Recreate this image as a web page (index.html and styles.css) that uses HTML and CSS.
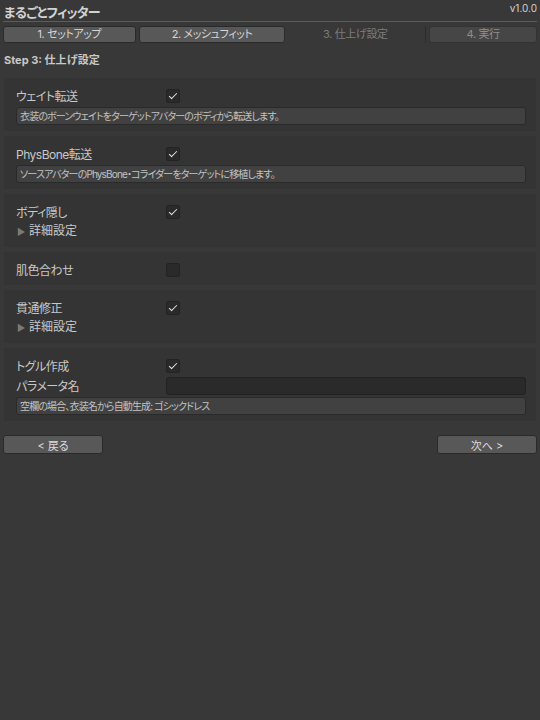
FILE: index.html
```html
<!DOCTYPE html>
<html lang="ja">
<head>
<meta charset="utf-8">
<title>まるごとフィッター</title>
<link rel="stylesheet" href="styles.css">
</head>
<body>
<div class="window">
  <header class="titlebar">
    <h1 class="title">まるごとフィッター</h1>
    <span class="version">v1.0.0</span>
  </header>

  <nav class="steps">
    <button class="step">1. セットアップ</button>
    <button class="step">2. メッシュフィット</button>
    <span class="step current">3. 仕上げ設定</span>
    <button class="step pending">4. 実行</button>
  </nav>

  <h2 class="heading">Step 3: 仕上げ設定</h2>

  <section class="box">
    <div class="row"><span class="label">ウェイト転送</span><span class="check on"></span></div>
    <div class="field">衣装のボーンウェイトをターゲットアバターのボディから転送します。</div>
  </section>

  <section class="box">
    <div class="row"><span class="label">PhysBone転送</span><span class="check on"></span></div>
    <div class="field">ソースアバターのPhysBone・コライダーをターゲットに移植します。</div>
  </section>

  <section class="box">
    <div class="row"><span class="label">ボディ隠し</span><span class="check on"></span></div>
    <div class="foldout"><span class="arrow">▶</span>詳細設定</div>
  </section>

  <section class="box">
    <div class="row"><span class="label">肌色合わせ</span><span class="check"></span></div>
  </section>

  <section class="box">
    <div class="row"><span class="label">貫通修正</span><span class="check on"></span></div>
    <div class="foldout"><span class="arrow">▶</span>詳細設定</div>
  </section>

  <section class="box">
    <div class="row"><span class="label">トグル作成</span><span class="check on"></span></div>
    <div class="row"><span class="label">パラメータ名</span><span class="input"></span></div>
    <div class="field">空欄の場合、衣装名から自動生成: ゴシックドレス</div>
  </section>

  <footer class="nav">
    <button class="navbtn">&lt; 戻る</button>
    <button class="navbtn">次へ &gt;</button>
  </footer>
</div>
</body>
</html>
```

FILE: styles.css
```css
html, body {
  margin: 0;
  padding: 0;
  background: #383838;
}

body {
  width: 540px;
  height: 720px;
  font-family: "Inter", "Noto Sans CJK JP", sans-serif;
  font-feature-settings: "palt";
  color: #c8c8c8;
  font-size: 12px;
}

.window {
  padding: 0 3px;
}

/* window title and version */
.titlebar {
  position: relative;
  height: 22px;
  border-bottom: 1px solid #5c5c5c;
  box-sizing: border-box;
}

.title {
  margin: 0;
  padding: 4px 0 0 1px;
  font-size: 13px;
  font-weight: 700;
  line-height: 16px;
  letter-spacing: -0.8px;
  color: #d2d2d2;
}

.version {
  position: absolute;
  right: 0;
  top: 2px;
  font-size: 10px;
  line-height: 12px;
  color: #d0d0d0;
}

/* step tabs */
.steps {
  display: flex;
  margin-top: 4px;
  height: 17px;
}

.step {
  font: inherit;
  font-size: 11px;
  line-height: 15px;
  letter-spacing: -0.4px;
  padding: 0;
  margin: 0;
  border: 1px solid #2a2a2a;
  border-radius: 3px;
  background: #585858;
  color: #d6d6d6;
  text-align: center;
}

.step:nth-child(1) { width: 133px; }
.step:nth-child(2) { width: 147px; margin-left: 3px; }

.step.current {
  width: 141px;
  border: none;
  background: none;
  color: #7c7c7c;
  line-height: 17px;
  border-right: 1px solid #2c2c2c;
  border-radius: 0;
  box-sizing: border-box;
}

.step.pending {
  width: 108px;
  margin-left: 3px;
  background: #464646;
  border-color: #333333;
  color: #8e8e8e;
}

.heading {
  margin: 10px 0 0 1px;
  font-size: 11px;
  font-weight: 700;
  line-height: 14px;
  color: #c8c8c8;
}

/* option groups */
.box {
  margin: 5px 0 0 1px;
  width: 532px;
  box-sizing: border-box;
  background: #343434;
  padding: 8px 10px 6px 12px;
}

.heading + .box { margin-top: 11px; }

.row {
  display: flex;
  align-items: center;
  height: 19px;
}

.label {
  width: 150px;
  flex: none;
  font-size: 12px;
  letter-spacing: -0.5px;
  color: #c8c8c8;
}

.check {
  width: 12px;
  height: 12px;
  border: 1px solid #232323;
  border-radius: 2px;
  background: #2a2a2a;
  position: relative;
}

.check.on::after {
  content: "";
  position: absolute;
  left: 3.5px;
  top: 1px;
  width: 3px;
  height: 7px;
  border: solid #e6e6e6;
  border-width: 0 1.6px 1.6px 0;
  transform: rotate(45deg);
}

.input {
  flex: 1;
  height: 16px;
  border: 1px solid #212121;
  border-radius: 3px;
  background: #2a2a2a;
}

.row + .row { margin-top: 1px; }

.field {
  margin-top: 2px;
  height: 18px;
  box-sizing: border-box;
  border: 1px solid #2a2a2a;
  border-radius: 3px;
  background: #414141;
  font-size: 10px;
  line-height: 16px;
  letter-spacing: -0.85px;
  padding-left: 3px;
  color: #c2c2c2;
  white-space: nowrap;
  overflow: hidden;
}

.foldout {
  height: 20px;
  line-height: 20px;
  font-size: 12px;
  color: #c8c8c8;
}

.arrow {
  display: inline-block;
  width: 12px;
  margin-left: 1px;
  font-size: 9px;
  color: #7a7a7a;
}

/* back / next */
.nav {
  display: flex;
  justify-content: space-between;
  margin-top: 14px;
}

.navbtn {
  font: inherit;
  font-size: 11px;
  width: 100px;
  height: 19px;
  padding: 0;
  border: 1px solid #2a2a2a;
  border-radius: 3px;
  background: #585858;
  color: #dcdcdc;
}
```
